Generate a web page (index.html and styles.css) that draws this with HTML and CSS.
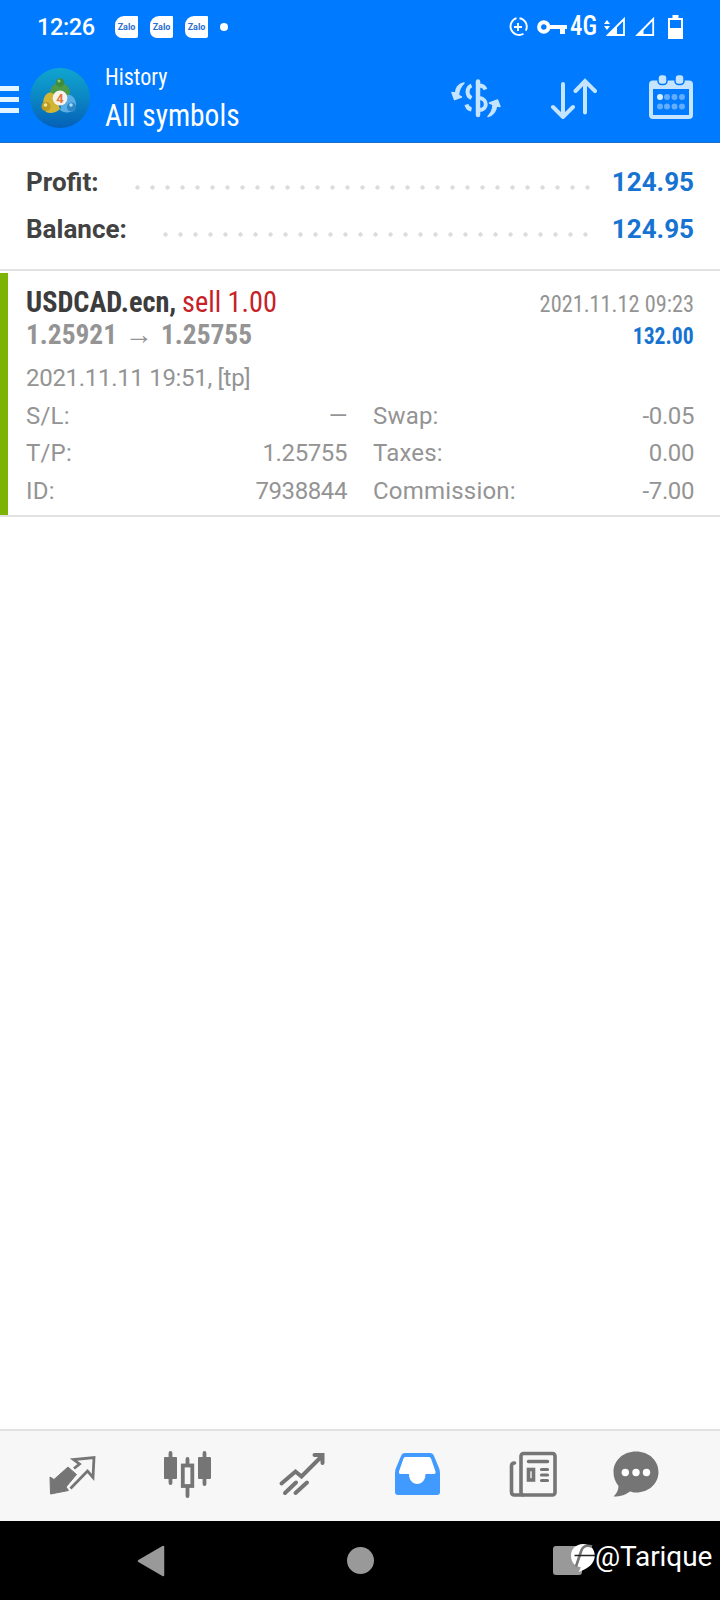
FILE: index.html
```html
<!DOCTYPE html>
<html lang="en">
  <head>
    <meta charset="utf-8" />
    <title>History</title>
    <link rel="stylesheet" href="styles.css">
  </head>
  <body>
    <div class="screen">
      <header class="header">
        <div class="status">
          <span class="clock">12:26</span>
          <div class="zalo"><span>Zalo</span></div>
          <div class="zalo"><span>Zalo</span></div>
          <div class="zalo"><span>Zalo</span></div>
          <div class="dot"></div>
          <div class="status-right">
            <svg class="saver" width="20" height="20" viewBox="0 0 20 20" fill="none" stroke="#fff" stroke-width="1.9">
              <path d="M8.500 1.200A8.600 8.600 0 1 0 15.500 16.800M11.500 1.200A8.600 8.600 0 0 1 17.800 13.600M10 6v8M6 10h8" />
            </svg>
            <svg class="key" width="31" height="16" viewBox="0 0 31 16">
              <circle cx="6.800" cy="8" r="4.700" fill="none" stroke="#fff" stroke-width="4" />
              <path d="M12 6h18v4h-2v5h-5v-5H12z" fill="#fff" />
            </svg>
            <span class="network"><span class="narrow">4G</span></span>
            <svg class="sig" width="22" height="20" viewBox="0 0 22 20">
              <path d="M0 7l3-4 3 4zM0 9h6l-3 4z" fill="#fff" />
              <path d="M4 18L20 2v16z" fill="none" stroke="#fff" stroke-width="1.800" />
              <path d="M3 19l10-10v10z" fill="#fff" />
            </svg>
            <svg class="sig2" width="20" height="20" viewBox="0 0 20 20">
              <path d="M2.500 18L18.200 2v16z" fill="none" stroke="#fff" stroke-width="1.800" />
              <path d="M0.500 19l8-8v8z" fill="#fff" />
            </svg>
            <svg class="battery" width="15" height="24" viewBox="0 0 15 24">
              <path d="M4.500 0h6v3H15v21H0V3h4.500z M2 5v8h11V5z" fill="#fff" fill-rule="evenodd" />
            </svg>
          </div>
        </div>
        <div class="appbar">
          <div class="menu"><i></i><i></i><i></i></div>
          <div class="logo">
            <svg width="60" height="60" viewBox="0 0 60 60">
              <defs>
                <linearGradient id="sky" x1="0" y1="0" x2="0" y2="1">
                  <stop offset="0" stop-color="#10a5cf" />
                  <stop offset="0.5" stop-color="#0b86c4" />
                  <stop offset="1" stop-color="#0560b8" />
                </linearGradient>
              </defs>
              <circle cx="30" cy="30" r="30" fill="url(#sky)" />
              <path d="M20 24c1-6 5-9 10-9s9 3 10 9l-2 9H22z" fill="#4d9a48" />
              <circle cx="30" cy="14.500" r="4.200" fill="#3d8b3c" />
              <circle cx="29" cy="13" r="1.500" fill="#8dcc7a" />
              <path d="M15 28c3-5 8-5 11 2l4 11c-4 4-10 5-14 3-3-5-4-11-1-16z" fill="#d3b536" />
              <circle cx="16" cy="38.500" r="4.600" fill="#b99a22" />
              <circle cx="15.500" cy="37" r="1.800" fill="#f3e58b" />
              <path d="M34 29c4-4 9-2 11 3 2 4 1 8-1 11-5 2-11 2-14-1z" fill="#59aee5" />
              <circle cx="41.500" cy="39" r="4.600" fill="#2d86c7" />
              <circle cx="41" cy="37" r="1.800" fill="#a9dcf7" />
              <circle cx="30" cy="30" r="7.400" fill="#f6f3ec" />
              <text x="30" y="34.500" text-anchor="middle" class="logo-num">4</text>
            </svg>
          </div>
          <div class="titles">
            <div class="title-small"><span class="narrow">History</span></div>
            <div class="title-big"><span class="narrow">All symbols</span></div>
          </div>
          <div class="actions">
            <svg width="52" height="42" viewBox="452 76 52 42" fill="none" stroke="#c4e4ff" stroke-width="4">
              <path d="M472.500 84.500c-5 2-5.500 10 0 12.500M467.500 103.500c.5 2.500 2.500 4.500 5 5" />
              <path d="M479 80.500V114" stroke-width="4.500" stroke-linecap="round" />
              <path d="M480 84.500c4 0 5.500 1.500 6.500 4M480 97c9 .5 9 12 0 12" />
              <path d="M465 82c-5 1-8 5-8.500 10l-3.500-.5 2.500 7 7-2.500-3-1.500c0-4.500 2-9 5.500-12.500z" fill="#c4e4ff" stroke-width="1.500" stroke-linejoin="round" />
              <path d="M489 115.500c5-1.500 8-5.500 8.500-10.500l3.500.5-2.500-6.500-8 3 3.500 1.500c0 4.500-1.500 8.500-5 12z" fill="#c4e4ff" stroke-width="1.500" stroke-linejoin="round" />
            </svg>
            <svg class="sort" width="48" height="42" viewBox="550 76 48 42" fill="none" stroke="#c4e4ff" stroke-width="4" stroke-linecap="round">
              <path d="M563 83v32M553 106l10 10 10-10M585 111.500V81M575.500 90l9.500-10 10 10" />
            </svg>
            <svg width="46" height="48" viewBox="648 74 46 48">
              <rect x="651" y="82.500" width="40" height="34.500" rx="2" fill="none" stroke="#c4e4ff" stroke-width="4" />
              <path d="M650 82h42v7h-42z" fill="#c4e4ff" />
              <g fill="#c4e4ff" stroke="#007aff" stroke-width="1.500">
                <rect x="658" y="74.500" width="9" height="10" rx="3.500" />
                <rect x="675" y="74.500" width="9" height="10" rx="3.500" />
              </g>
              <g fill="#62adff">
                <circle cx="660" cy="97" r="3" fill="#d8efff" />
                <circle cx="667" cy="97" r="3" />
                <circle cx="674.500" cy="97" r="3" />
                <circle cx="682" cy="97" r="3" />
                <circle cx="660" cy="106.500" r="3" />
                <circle cx="667" cy="106.500" r="3" />
                <circle cx="674.500" cy="106.500" r="3" />
                <circle cx="682" cy="106.500" r="3" />
              </g>
            </svg>
          </div>
        </div>
      </header>

      <section class="summary">
        <div class="sum-row">
          <b>Profit:</b>
          <div class="dots dots-profit"></div>
          <b class="sum-value">124.95</b>
        </div>
        <div class="sum-row">
          <b>Balance:</b>
          <div class="dots dots-balance"></div>
          <b class="sum-value">124.95</b>
        </div>
      </section>

      <section class="deal">
        <div class="line deal-head">
          <b class="symbol">USDCAD.ecn,</b>
          <span class="side">sell 1.00</span>
          <span class="close-time">2021.11.12 09:23</span>
        </div>
        <div class="line deal-price">
          <div class="prices">1.25921<span class="arrow">→</span>1.25755</div>
          <b class="deal-profit">132.00</b>
        </div>
        <div class="open-time">2021.11.11 19:51, [tp]</div>
        <div class="details">
          <div class="pair"><span>S/L:</span><span class="num">—</span></div>
          <div class="pair"><span>Swap:</span><span class="num">-0.05</span></div>
          <div class="pair"><span>T/P:</span><span class="num">1.25755</span></div>
          <div class="pair"><span>Taxes:</span><span class="num">0.00</span></div>
          <div class="pair"><span>ID:</span><span class="num">7938844</span></div>
          <div class="pair"><span>Commission:</span><span class="num">-7.00</span></div>
        </div>
      </section>

      <main class="empty"></main>

      <nav class="tabs">
        <svg width="50" height="50" viewBox="47 1448 50 50">
          <path d="M50 1477l4 2.500 14-12.500 8.500 7.500-10.500 12.500 2.500 3.500-18 3.500z" fill="#757575" stroke="#757575" stroke-linejoin="round" />
          <path d="M70.500 1488.500l17-17.500 5.500 6.500 1-20-20.500 2 6 4.500-5.500 4.500" fill="none" stroke="#757575" stroke-width="2.800" />
        </svg>
        <svg width="50" height="50" viewBox="162 1448 50 50">
          <path d="M170.500 1453v30M204.500 1453v31M187.500 1459v37" stroke="#757575" stroke-width="3.800" stroke-linecap="round" />
          <rect x="164" y="1457" width="13" height="22" rx="1" fill="#757575" />
          <rect x="198" y="1457" width="13" height="22" rx="1" fill="#757575" />
          <rect x="182.800" y="1465.500" width="9.500" height="20.500" fill="#f7f7f7" stroke="#757575" stroke-width="3.800" />
        </svg>
        <svg width="50" height="50" viewBox="277 1448 50 50" fill="none" stroke="#757575" stroke-width="4" stroke-linecap="round">
          <path d="M281.500 1483.500l14-12 6 5 20-20M314.500 1455h8v8M285 1493l11-10.500M295.500 1493l11.500-10.500" />
        </svg>
        <svg width="50" height="50" viewBox="392 1448 50 50">
          <path d="M405 1453h25q3 0 4 3l5 12q1 2 1 5v19q0 3-3 3h-39q-3 0-3-3v-19q0-3 1-5l5-12q1-3 4-3zM406 1457q-1.500 0-2 1.500l-4.500 13q-.5 2.500 2 2.500h8c0 13 16 13 16 0h8q2.500 0 2-2.500l-4.500-13q-.5-1.500-2-1.500z" fill="#419aff" fill-rule="evenodd" />
          <path d="M406 1457h22.500q1.500 0 2 1.500l4.500 13q.5 2.500-2 2.500h-8c0 13-16 13-16 0h-8q-2.500 0-2-2.500l4.500-13q.5-1.500 2-1.500z" fill="#fff" />
        </svg>
        <svg width="50" height="50" viewBox="507 1448 50 50" fill="none" stroke="#757575" stroke-width="3.600" stroke-linecap="round">
          <rect x="521" y="1453.500" width="34" height="41.500" rx="2.500" />
          <path d="M514.500 1463c-2 0-3 1-3 3v26q0 3 3 3h8M528.500 1461.500h19" />
          <rect x="528.500" y="1469.500" width="5" height="10.500" />
          <path d="M541.500 1469.500h6M541.500 1475h6M541.500 1480.500h6" stroke-width="3.200" />
        </svg>
        <svg width="50" height="50" viewBox="610 1448 50 50">
          <path d="M636 1451.500c13 0 22.500 9 22.500 20.500s-9.500 20.500-22.500 20.500c-2.500 0-4-.5-6-1-4 3-9 5-16.500 5 3-3 5-6.500 5-10.500-3-4-5-8-5-14 0-11.500 9.500-20.500 22.500-20.500z" fill="#757575" />
          <g fill="#fff"><circle cx="625.300" cy="1472.500" r="3.700" /><circle cx="636" cy="1472.500" r="3.700" /><circle cx="646.500" cy="1472.500" r="3.700" /></g>
        </svg>
      </nav>

      <footer class="sysnav">
        <svg width="28" height="32" viewBox="0 0 28 32"><path d="M26 2v28L2 16z" fill="#999" stroke="#999" stroke-width="2.500" stroke-linejoin="round" /></svg>
        <div class="home"></div>
        <div class="recent"></div>
        <div class="watermark">
          <svg width="26" height="30" viewBox="568 1543 26 30">
            <path d="M582 1545c7 0 11.800 5 11.800 11.500 0 8-7 13.500-16.300 16.500 1.500-2 2-3.500 2-5-5.500 0-9.500-5-9.500-11.500s5-11.500 12-11.500z" fill="#fff" />
            <path d="M591 1547.500c-6-2-9.500 0-11 5l-5 15" fill="none" stroke="#777" stroke-width="2.600" />
            <path d="M573.500 1556.500h20.500" fill="none" stroke="#222" stroke-width="1.500" />
          </svg>
          <span>@Tarique</span>
        </div>
      </footer>
    </div>
  </body>
</html>
```
FILE: styles.css
```css
* {
  box-sizing: border-box;
}
body {
  margin: 0;
  font-family: Roboto, "Liberation Sans", sans-serif;
  color: #949494;
}
svg {
  display: block;
  flex: none;
}
.screen {
  display: flex;
  flex-direction: column;
  width: 720px;
  height: 1600px;
  background: #fff;
  overflow: hidden;
}
.narrow {
  display: inline-block;
  white-space: nowrap;
  transform: scaleX(0.92);
  transform-origin: 0 50%;
}

/* header */
.header {
  height: 143px;
  background: #007aff;
  border-bottom: 1px solid #1a6fc4;
  color: #fff;
}
.status {
  display: flex;
  align-items: center;
  height: 53px;
  padding-left: 37px;
}
.clock {
  width: 78px;
  font-size: 23.5px;
  font-weight: 500;
  letter-spacing: -0.4px;
  line-height: 54px;
}
.zalo {
  width: 23px;
  height: 22px;
  margin-right: 12px;
  border-radius: 9px 1px 2px 7px;
  background: #fff;
  color: #2b6fd0;
  font-size: 9px;
  font-weight: 700;
  line-height: 22px;
  text-align: center;
}
.dot {
  width: 8px;
  height: 8px;
  border-radius: 50%;
  background: #fff;
}
.status-right {
  display: flex;
  align-items: center;
  margin-left: auto;
  padding-right: 37px;
}
.key {
  margin-left: 9px;
}
.network {
  width: 34px;
  margin-left: 2px;
  margin-right: 1px;
  font-size: 27px;
  font-stretch: 75%;
  font-weight: 500;
  line-height: 55px;
}
.sig {
  margin-left: -1px;
}
.sig2 {
  margin-left: 9px;
}
.battery {
  margin-left: 13px;
}
.appbar {
  display: flex;
  align-items: center;
  height: 90px;
}
.menu {
  display: flex;
  flex-direction: column;
  gap: 6px;
  width: 19px;
  padding-top: 3px;
}
.menu i {
  height: 5px;
  background: #e4f5ff;
}
.logo {
  margin: 0 15px 0 11px;
}
.logo-num {
  fill: #e0763c;
  font-size: 13px;
  font-weight: 700;
}
.title-small {
  font-size: 24px;
  font-stretch: 75%;
  line-height: 34px;
}
.title-big {
  font-size: 32px;
  font-stretch: 75%;
  line-height: 42px;
}
.actions {
  display: flex;
  align-items: center;
  gap: 47px;
  margin-left: auto;
  padding-right: 26px;
}
.sort {
  margin-right: 3px;
}

/* profit and balance */
.summary {
  height: 128px;
  padding: 16px 26px 0;
  border-bottom: 2px solid #e2e2e2;
}
.sum-row {
  display: flex;
  align-items: center;
  height: 47px;
  color: #424242;
  font-size: 26px;
  line-height: 47px;
}
.sum-value {
  color: #1673d2;
}
.dots {
  height: 5px;
  margin: 10px 0 0 auto;
  background: radial-gradient(circle, #dcdcdc 1.9px, transparent 2.4px) 0 0 / 15px 5px;
}
.dots-profit {
  width: 465px;
  margin-right: 17px;
}
.dots-balance {
  width: 435px;
  margin-right: 19px;
}

/* closed deal */
.deal {
  height: 244px;
  margin-top: 2px;
  padding: 10px 26px 0;
  background: linear-gradient(#7cb305, #7cb305) no-repeat 0 0 / 8px 100%;
  border-bottom: 2px solid #e2e2e2;
}
.line {
  display: flex;
  align-items: baseline;
  white-space: nowrap;
}
.deal-head {
  height: 36px;
  line-height: 38px;
}
.symbol {
  width: 156px;
  color: #3c3c3c;
  font-size: 29px;
  font-stretch: 75%;
  transform: scaleX(0.975);
  transform-origin: 0 50%;
}
.side {
  color: #c62127;
  font-size: 29px;
  font-stretch: 75%;
  transform: scaleX(0.975);
  transform-origin: 0 50%;
}
.close-time {
  margin-left: auto;
  font-size: 24px;
  font-stretch: 75%;
  transform: scaleX(0.93);
  transform-origin: 100% 50%;
}
.deal-price {
  height: 32px;
  line-height: 31px;
}
.prices {
  font-size: 28px;
  font-stretch: 75%;
  font-weight: 700;
  transform: scaleX(0.978);
  transform-origin: 0 50%;
}
.arrow {
  display: inline-block;
  width: 45px;
  font-family: "Liberation Sans", sans-serif;
  font-size: 29px;
  line-height: 20px;
  text-align: center;
}
.deal-profit {
  margin-left: auto;
  color: #1673d2;
  font-size: 24px;
  font-stretch: 75%;
  transform: scaleX(0.9);
  transform-origin: 100% 50%;
}
.open-time {
  margin-top: 8px;
  font-size: 24px;
  letter-spacing: -0.3px;
  line-height: 38px;
}
.details {
  display: grid;
  grid-template-columns: 321px 321px;
  column-gap: 26px;
  padding-top: 0.5px;
  font-size: 24px;
  letter-spacing: 0.2px;
  line-height: 37.5px;
}
.pair {
  display: flex;
  justify-content: space-between;
}
.num {
  letter-spacing: -0.4px;
}
.empty {
  flex: 1;
}

/* bottom bars */
.tabs {
  display: flex;
  align-items: center;
  gap: 65px;
  height: 92px;
  padding: 0 0 6px 47px;
  border-top: 2px solid #e2e2e2;
  background: #f7f7f7;
}
.tabs svg:last-child {
  margin-left: -12px;
}
.sysnav {
  position: relative;
  display: flex;
  align-items: center;
  height: 79px;
  padding-left: 137px;
  background: #000;
}
.home {
  width: 27px;
  height: 27px;
  margin-left: 182px;
  border-radius: 50%;
  background: #999;
}
.recent {
  width: 29px;
  height: 29px;
  margin-left: 179px;
  border-radius: 3px;
  background: #999;
}
.watermark {
  position: absolute;
  top: 19px;
  left: 569px;
  display: flex;
  align-items: center;
  color: #fff;
  font-size: 28px;
  letter-spacing: -0.1px;
}
```
